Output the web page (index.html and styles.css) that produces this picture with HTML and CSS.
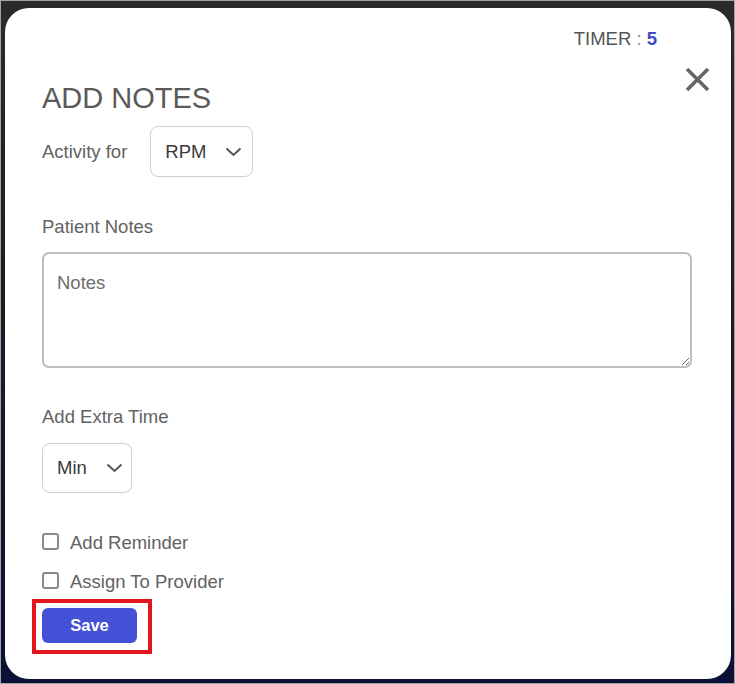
FILE: index.html
```html
<!DOCTYPE html>
<html lang="en">
<head>
    <meta charset="UTF-8">
    <meta name="viewport" content="width=device-width, initial-scale=1.0">
    <title>Add Notes</title>
    <link rel="stylesheet" href="styles.css">
</head>
<body>
    <div class="screen">
        <div class="modal">
            <div class="timer">TIMER <span class="colon">:</span> <span class="timer-value">5</span></div>

            <button class="close" aria-label="Close">
                <svg width="25" height="25" viewBox="0 0 25 25">
                    <path d="M2 2 L23 23 M23 2 L2 23" stroke="#666" stroke-width="3.6" stroke-linecap="butt" fill="none"/>
                </svg>
            </button>

            <h2 class="title">ADD NOTES</h2>

            <div class="activity-row">
                <span class="label">Activity for</span>
                <div class="select select-rpm">
                    <span>RPM</span>
                    <svg width="17" height="10" viewBox="0 0 17 10">
                        <path d="M1.5 1.5 L8.5 8 L15.5 1.5" stroke="#555" stroke-width="2" fill="none"/>
                    </svg>
                </div>
            </div>

            <div class="label label-notes">Patient Notes</div>
            <textarea class="notes" placeholder="Notes"></textarea>

            <div class="label label-time">Add Extra Time</div>
            <div class="select select-min">
                <span>Min</span>
                <svg width="17" height="10" viewBox="0 0 17 10">
                    <path d="M1.5 1.5 L8.5 8 L15.5 1.5" stroke="#555" stroke-width="2" fill="none"/>
                </svg>
            </div>

            <label class="check check-first"><input type="checkbox"> Add Reminder</label>
            <label class="check"><input type="checkbox"> Assign To Provider</label>

            <div class="highlight">
                <button class="save">Save</button>
            </div>
        </div>
    </div>
</body>
</html>
```

FILE: styles.css
```css
* {
    box-sizing: border-box;
}
body {
    margin: 0;
    font-family: 'Liberation Sans', Arial, sans-serif;
    background: #9a9a9a;
}
.screen {
    width: 735px;
    height: 684px;
    border: 1px solid #a4a4a4;
    padding: 7px 3px 4px 4px;
    background: linear-gradient(180deg, #2b2b2b 0%, #1b1b24 45%, #0c1036 100%);
}
.modal {
    position: relative;
    height: 671px;
    background: #fff;
    border-radius: 24px;
    padding: 21px 39px 0 37px;
    color: #5f5f5f;
}
.timer {
    text-align: right;
    margin-right: 35px;
    font-size: 18.5px;
    line-height: 20px;
    color: #555;
}
.colon {
    color: #8a8a8a;
}
.timer-value {
    color: #3d4ec4;
    font-weight: bold;
}
.close {
    position: absolute;
    top: 59px;
    right: 21px;
    padding: 0;
    border: none;
    background: none;
    width: 25px;
    height: 25px;
    cursor: pointer;
}
.close svg {
    display: block;
}
.title {
    margin: 32px 0 0;
    font-size: 29px;
    line-height: 34px;
    font-weight: normal;
    color: #5a5a5a;
}
.label {
    font-size: 18.5px;
    line-height: 22px;
    color: #626262;
}
.activity-row {
    display: flex;
    align-items: center;
    margin-top: 11px;
}
.select {
    display: flex;
    align-items: center;
    justify-content: space-between;
    border: 1px solid #cfcfcf;
    border-radius: 8px;
    font-size: 18.5px;
    color: #3a3a3a;
    background: #fff;
}
.select svg {
    display: block;
}
.select-rpm {
    margin-left: 23px;
    width: 103px;
    height: 51px;
    padding: 0 10px 0 14px;
}
.label-notes {
    margin-top: 39px;
}
.notes {
    display: block;
    margin-top: 14px;
    width: 650px;
    height: 116px;
    border: 2px solid #bdbdbd;
    border-radius: 7px;
    padding: 18px 13px;
    font-family: 'Liberation Sans', Arial, sans-serif;
    font-size: 18.5px;
    line-height: 22px;
    color: #333;
}
.notes::placeholder {
    color: #6e6e6e;
}
.label-time {
    margin-top: 38px;
}
.select-min {
    margin-top: 15px;
    width: 90px;
    height: 50px;
    padding: 0 8px 0 14px;
}
.check {
    display: flex;
    align-items: center;
    gap: 11px;
    margin-top: 17px;
    font-size: 18.5px;
    line-height: 22px;
    color: #626262;
}
.check-first {
    margin-top: 39px;
}
.check input {
    appearance: none;
    margin: 0 0 3px;
    width: 17px;
    height: 17px;
    border: 2px solid #8a8a8a;
    border-radius: 3px;
    background: #fff;
}
.highlight {
    display: inline-block;
    margin: 6px 0 0 -10px;
    border: 4px solid #e3161e;
    padding: 5px 11px 7px 6px;
}
.save {
    display: block;
    width: 95px;
    height: 35px;
    border: none;
    border-radius: 6px;
    background: #4450d6;
    color: #fff;
    font-family: 'Liberation Sans', Arial, sans-serif;
    font-size: 16.5px;
    font-weight: bold;
    cursor: pointer;
}
```
